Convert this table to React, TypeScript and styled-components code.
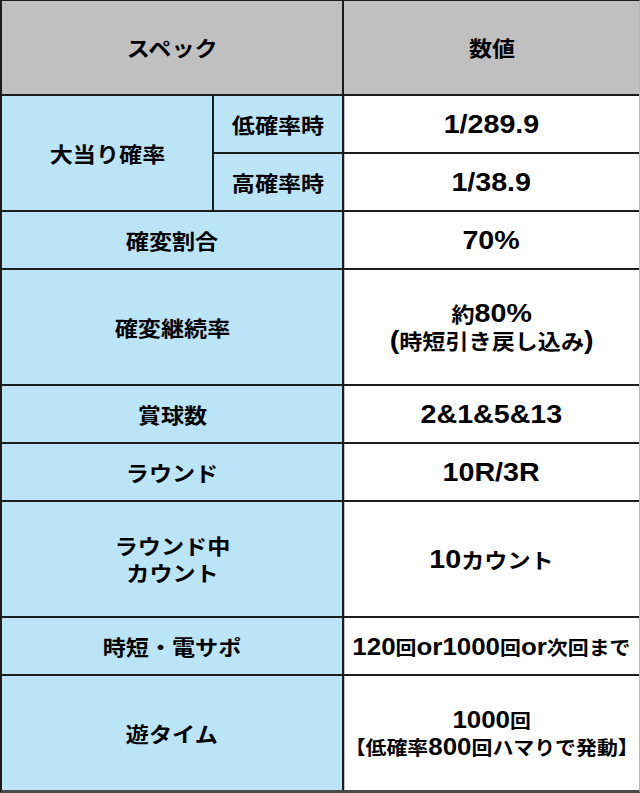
import React from 'react';
import styled, { createGlobalStyle } from 'styled-components';

const GlobalStyle = createGlobalStyle`
  html, body {
    margin: 0;
    padding: 0;
    background: #ffffff;
  }
`;

type Row = {
  label: string[];
  value: string[];
  small?: boolean;
};

const rows: Row[] = [
  { label: ['確変割合'], value: ['70%'] },
  { label: ['確変継続率'], value: ['約80%', '(時短引き戻し込み)'] },
  { label: ['賞球数'], value: ['2&1&5&13'] },
  { label: ['ラウンド'], value: ['10R/3R'] },
  { label: ['ラウンド中', 'カウント'], value: ['10カウント'] },
  { label: ['時短・電サポ'], value: ['120回or1000回or次回まで'], small: true },
  { label: ['遊タイム'], value: ['1000回', '【低確率800回ハマりで発動】'], small: true },
];

// latin runs (digits, %, &, /) are set in a bigger latin face
const runs = (s: string) =>
  s.split(/([\x20-\x7E]+)/).map((part, i) =>
    /^[\x20-\x7E]+$/.test(part) ? <Num key={i}>{part}</Num> : part
  );

function App() {
  return (
    <>
      <GlobalStyle />
      <Sheet>
        <HeadCell $span={2}>
          <Text>スペック</Text>
        </HeadCell>
        <HeadCell>
          <Text>数値</Text>
        </HeadCell>

        <LabelCell $rows={2}>
          <Text>大当り確率</Text>
        </LabelCell>
        <LabelCell>
          <Text>低確率時</Text>
        </LabelCell>
        <ValueCell>
          <Text>{runs('1/289.9')}</Text>
        </ValueCell>
        <LabelCell>
          <Text>高確率時</Text>
        </LabelCell>
        <ValueCell>
          <Text>{runs('1/38.9')}</Text>
        </ValueCell>

        {rows.map((r) => (
          <React.Fragment key={r.label.join('')}>
            <LabelCell $span={2}>
              <Text>
                {r.label.map((l, i) => (
                  <Line key={i}>{l}</Line>
                ))}
              </Text>
            </LabelCell>
            <ValueCell>
              <Text $small={r.small}>
                {r.value.map((v, i) => (
                  <Line key={i}>{runs(v)}</Line>
                ))}
              </Text>
            </ValueCell>
          </React.Fragment>
        ))}
      </Sheet>
    </>
  );
}

export default App;

const Sheet = styled.div`
  display: grid;
  grid-template-columns: 210px 128px 295px;
  grid-template-rows: 93px 56px 56px 56px 114px 56px 56px 114px 56px 114px;
  gap: 2px;
  width: 640px;
  height: 793px;
  box-sizing: border-box;
  background: #1c1c1c;
  border-top: 1px solid #1c1c1c;
  border-left: 2px solid #1c1c1c;
  border-right: 1px solid #b9b9b9;
  border-bottom: 3px solid #4a4a4a;
  font-family: 'Noto Sans CJK JP', 'Liberation Sans', sans-serif;
  font-weight: 700;
  color: #000;
`;

const Cell = styled.div<{ $span?: number; $rows?: number }>`
  display: flex;
  align-items: center;
  justify-content: center;
  text-align: center;
  grid-column: span ${(p) => p.$span || 1};
  grid-row: span ${(p) => p.$rows || 1};
`;

const HeadCell = styled(Cell)`
  background: #c0c0c0;
`;

const LabelCell = styled(Cell)`
  background: #bce4f7;
`;

const ValueCell = styled(Cell)`
  background: #ffffff;
  box-shadow: inset 1px 0 0 #c4c4c4;
`;

const Text = styled.div<{ $small?: boolean }>`
  display: inline-block;
  font-size: ${(p) => (p.$small ? '19px' : '21px')};
  line-height: 27px;
  transform: scaleX(1.1);
`;

const Line = styled.div`
  white-space: nowrap;
  height: 27px;
`;

const Num = styled.span`
  font-family: 'Liberation Sans', 'Noto Sans CJK JP', sans-serif;
  font-size: 1.24em;
  line-height: 0;
`;
